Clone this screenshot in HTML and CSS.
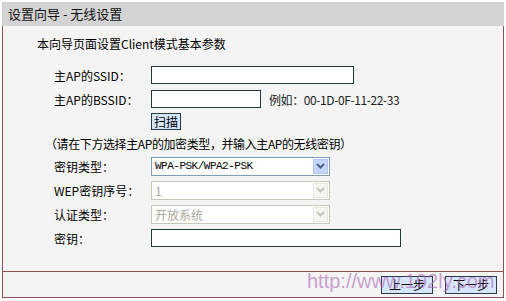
FILE: index.html
```html
<!DOCTYPE html>
<html lang="zh-CN">
<head>
    <meta charset="UTF-8">
    <title>设置向导 - 无线设置</title>
    <link rel="stylesheet" href="styles.css">
</head>
<body>
    <div class="wizard">
        <div class="title-bar">设置向导 - 无线设置</div>
        <div class="panel">
            <div class="content">
                <p class="intro">本向导页面设置Client模式基本参数</p>

                <div class="row">
                    <span class="label">主AP的SSID：</span>
                    <input type="text" class="field field-ssid">
                </div>
                <div class="row">
                    <span class="label">主AP的BSSID：</span>
                    <input type="text" class="field field-bssid">
                    <span class="hint">例如：00-1D-0F-11-22-33</span>
                </div>
                <div class="row row-scan">
                    <span class="label"></span>
                    <button type="button" class="btn">扫描</button>
                </div>
                <div class="row row-note">
                    <span class="note">（请在下方选择主AP的加密类型，并输入主AP的无线密钥）</span>
                </div>

                <div class="row">
                    <span class="label">密钥类型：</span>
                    <div class="select">
                        <span class="select-text">WPA-PSK/WPA2-PSK</span>
                        <span class="select-arrow">
                            <svg width="9" height="6" viewBox="0 0 9 6"><path d="M1 1 L4.5 4.5 L8 1" fill="none" stroke="#4d6185" stroke-width="2"/></svg>
                        </span>
                    </div>
                </div>
                <div class="row">
                    <span class="label">WEP密钥序号：</span>
                    <div class="select disabled">
                        <span class="select-text">1</span>
                        <span class="select-arrow">
                            <svg width="9" height="6" viewBox="0 0 9 6"><path d="M1 1 L4.5 4.5 L8 1" fill="none" stroke="#c9c7ba" stroke-width="2"/></svg>
                        </span>
                    </div>
                </div>
                <div class="row">
                    <span class="label">认证类型：</span>
                    <div class="select disabled">
                        <span class="select-text">开放系统</span>
                        <span class="select-arrow">
                            <svg width="9" height="6" viewBox="0 0 9 6"><path d="M1 1 L4.5 4.5 L8 1" fill="none" stroke="#c9c7ba" stroke-width="2"/></svg>
                        </span>
                    </div>
                </div>
                <div class="row">
                    <span class="label">密钥：</span>
                    <input type="password" class="field field-key">
                </div>
            </div>

            <div class="footer">
                <button type="button" class="btn btn-step">上一步</button>
                <button type="button" class="btn btn-step">下一步</button>
                <span class="watermark">http://www.192ly.com</span>
            </div>
        </div>
    </div>
</body>
</html>
```

FILE: styles.css
```css
body {
    margin: 0;
    padding: 2px 2px 0 2px;
    background: #ffffff;
    font-family: "Noto Sans CJK SC", "DejaVu Sans", sans-serif;
    font-size: 12px;
    color: #000;
}
.wizard {
    width: 502px;
}
.title-bar {
    height: 24px;
    line-height: 24px;
    background: #d4d4d4;
    padding-left: 6px;
    font-size: 13px;
    color: #111;
}
.panel {
    border: 1px solid #8e5252;
    border-top: none;
    background: #f4f4f4;
    height: 271px;
    display: flex;
    flex-direction: column;
}
.content {
    flex: 1;
    padding: 6px 0 0 34px;
}
.intro {
    margin: 0 0 7px 0;
    line-height: 24px;
    font-size: 12px;
}
.row {
    display: flex;
    align-items: center;
    height: 24px;
    padding-left: 17px;
}
.row-scan {
    height: 21px;
}
.row-note {
    height: 22px;
    padding-left: 8px;
}
.note {
    letter-spacing: -0.4px;
}
.label {
    width: 97px;
    flex-shrink: 0;
}
.field {
    box-sizing: border-box;
    height: 18px;
    margin: 0;
    padding: 0 2px;
    border: 1px solid #1f3a3a;
    background: #fff;
}
.field-ssid {
    width: 203px;
}
.field-bssid {
    width: 110px;
}
.field-key {
    width: 250px;
}
.hint {
    margin-left: 8px;
    color: #222;
    letter-spacing: -0.4px;
}
.btn {
    box-sizing: border-box;
    height: 17px;
    padding: 0 2px;
    margin: 0;
    border: 1px solid #2b3b4b;
    background: #d6e6fa;
    font-family: inherit;
    font-size: 12px;
    line-height: 15px;
    color: #000;
}
.select {
    box-sizing: border-box;
    width: 179px;
    height: 19px;
    border: 1px solid #7f9db9;
    background: #fff;
    display: flex;
    align-items: center;
    justify-content: space-between;
    padding: 0 1px 0 3px;
}
.select-text {
    font-family: "Liberation Mono", "Noto Sans CJK SC", monospace;
    font-size: 11px;
    letter-spacing: -0.5px;
}
.select-arrow {
    width: 15px;
    height: 15px;
    box-sizing: border-box;
    background: #c4d5fc;
    border: 1px solid #b3c6ee;
    display: flex;
    align-items: center;
    justify-content: center;
}
.select.disabled {
    border-color: #c9c7ba;
}
.select.disabled .select-text {
    color: #aca899;
    font-family: "Noto Sans CJK SC", sans-serif;
    font-size: 12px;
    letter-spacing: 0;
}
.select.disabled .select-arrow {
    background: #f4f4f0;
    border-color: #e8e8e0;
}
.footer {
    position: relative;
    height: 25px;
    border-top: 1px solid #8e5252;
    display: flex;
    align-items: center;
    justify-content: flex-end;
    gap: 12px;
    padding-right: 6px;
}
.btn-step {
    width: 52px;
    height: 18px;
}
.watermark {
    position: absolute;
    left: 304px;
    top: -2px;
    font-family: "Liberation Sans", Arial, sans-serif;
    font-size: 20px;
    color: rgba(170, 100, 180, 0.6);
}
```
